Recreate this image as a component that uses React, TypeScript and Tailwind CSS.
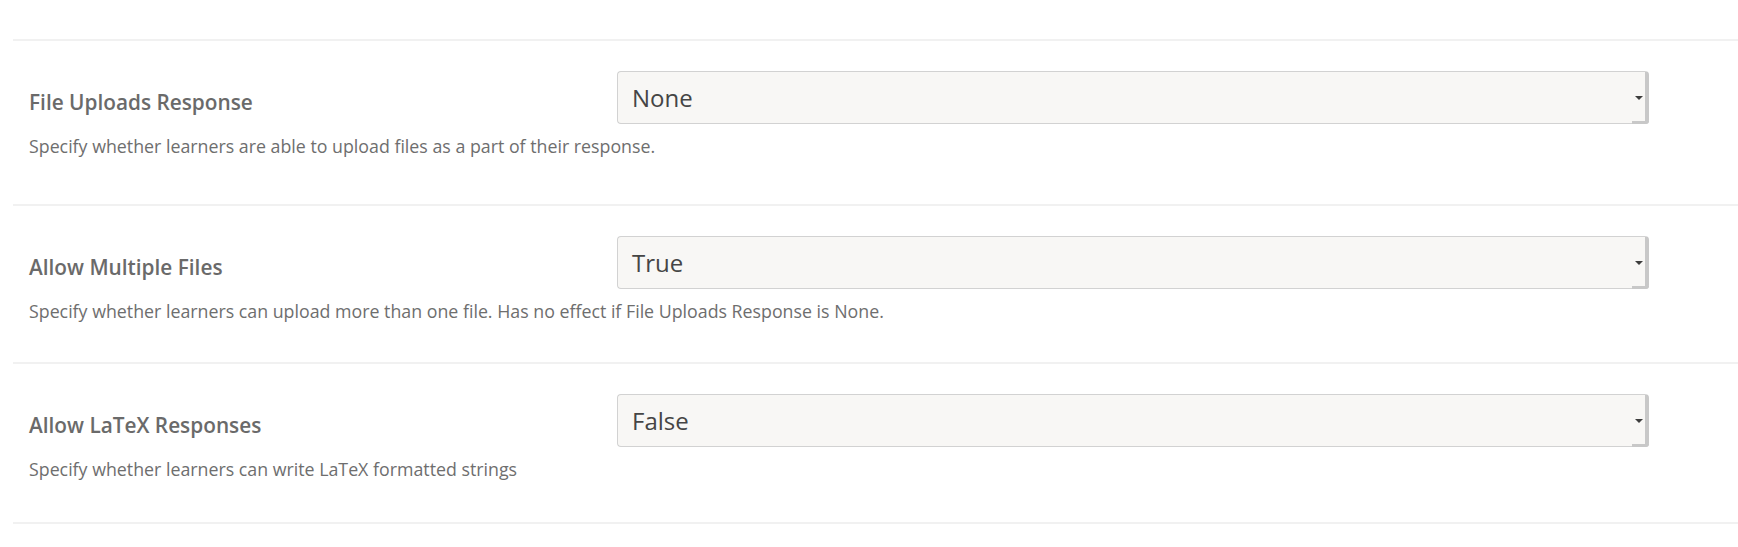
import React from "react";

interface SettingRowProps {
  label: string;
  value: string;
  help: string;
  bottom: string;
}

function SettingRow({ label, value, help, bottom }: SettingRowProps) {
  return (
    <div className={`ml-[13px] border-t-2 border-[#f1f1f1] pt-[30px] pl-[16px] ${bottom}`}>
      <div className="flex items-center">
        <div className="w-[588px] pt-[8px] text-[20.8px] font-semibold leading-[28px] text-[#6a6a6a]">
          {label}
        </div>
        <div className="relative flex h-[53px] w-[1032px] items-center rounded-[4px] border border-r-[4px] border-[#d2d2d2] border-r-[#c8c8c8] bg-[#f8f7f5] pl-[14px] pr-[2px]">
          <span className="flex-1 text-[24px] leading-[32px] text-[#454545]">{value}</span>
          <span className="h-0 w-0 border-x-[4px] border-t-[4px] border-x-transparent border-t-[#3d3d3d]" />
          <span className="absolute -bottom-px right-[-4px] h-[3px] w-[17px] rounded-br-[4px] bg-[#c8c8c8]" />
        </div>
      </div>
      <p className="mt-[10px] text-[17.8px] leading-[24px] text-[#6e6e6e]">{help}</p>
    </div>
  );
}

export default function App() {
  const rows: SettingRowProps[] = [
    {
      label: "File Uploads Response",
      value: "None",
      help: "Specify whether learners are able to upload files as a part of their response.",
      bottom: "pb-[46px]",
    },
    {
      label: "Allow Multiple Files",
      value: "True",
      help: "Specify whether learners can upload more than one file. Has no effect if File Uploads Response is None.",
      bottom: "pb-[39px]",
    },
    {
      label: "Allow LaTeX Responses",
      value: "False",
      help: "Specify whether learners can write LaTeX formatted strings",
      bottom: "pb-[41px]",
    },
  ];

  return (
    <div className="min-h-[547px] w-full bg-white pt-[39px]" style={{ fontFamily: '"Open Sans", sans-serif' }}>
      {rows.map((row) => (
        <SettingRow key={row.label} {...row} />
      ))}
      <div className="ml-[13px] border-t-2 border-[#f1f1f1]" />
    </div>
  );
}
